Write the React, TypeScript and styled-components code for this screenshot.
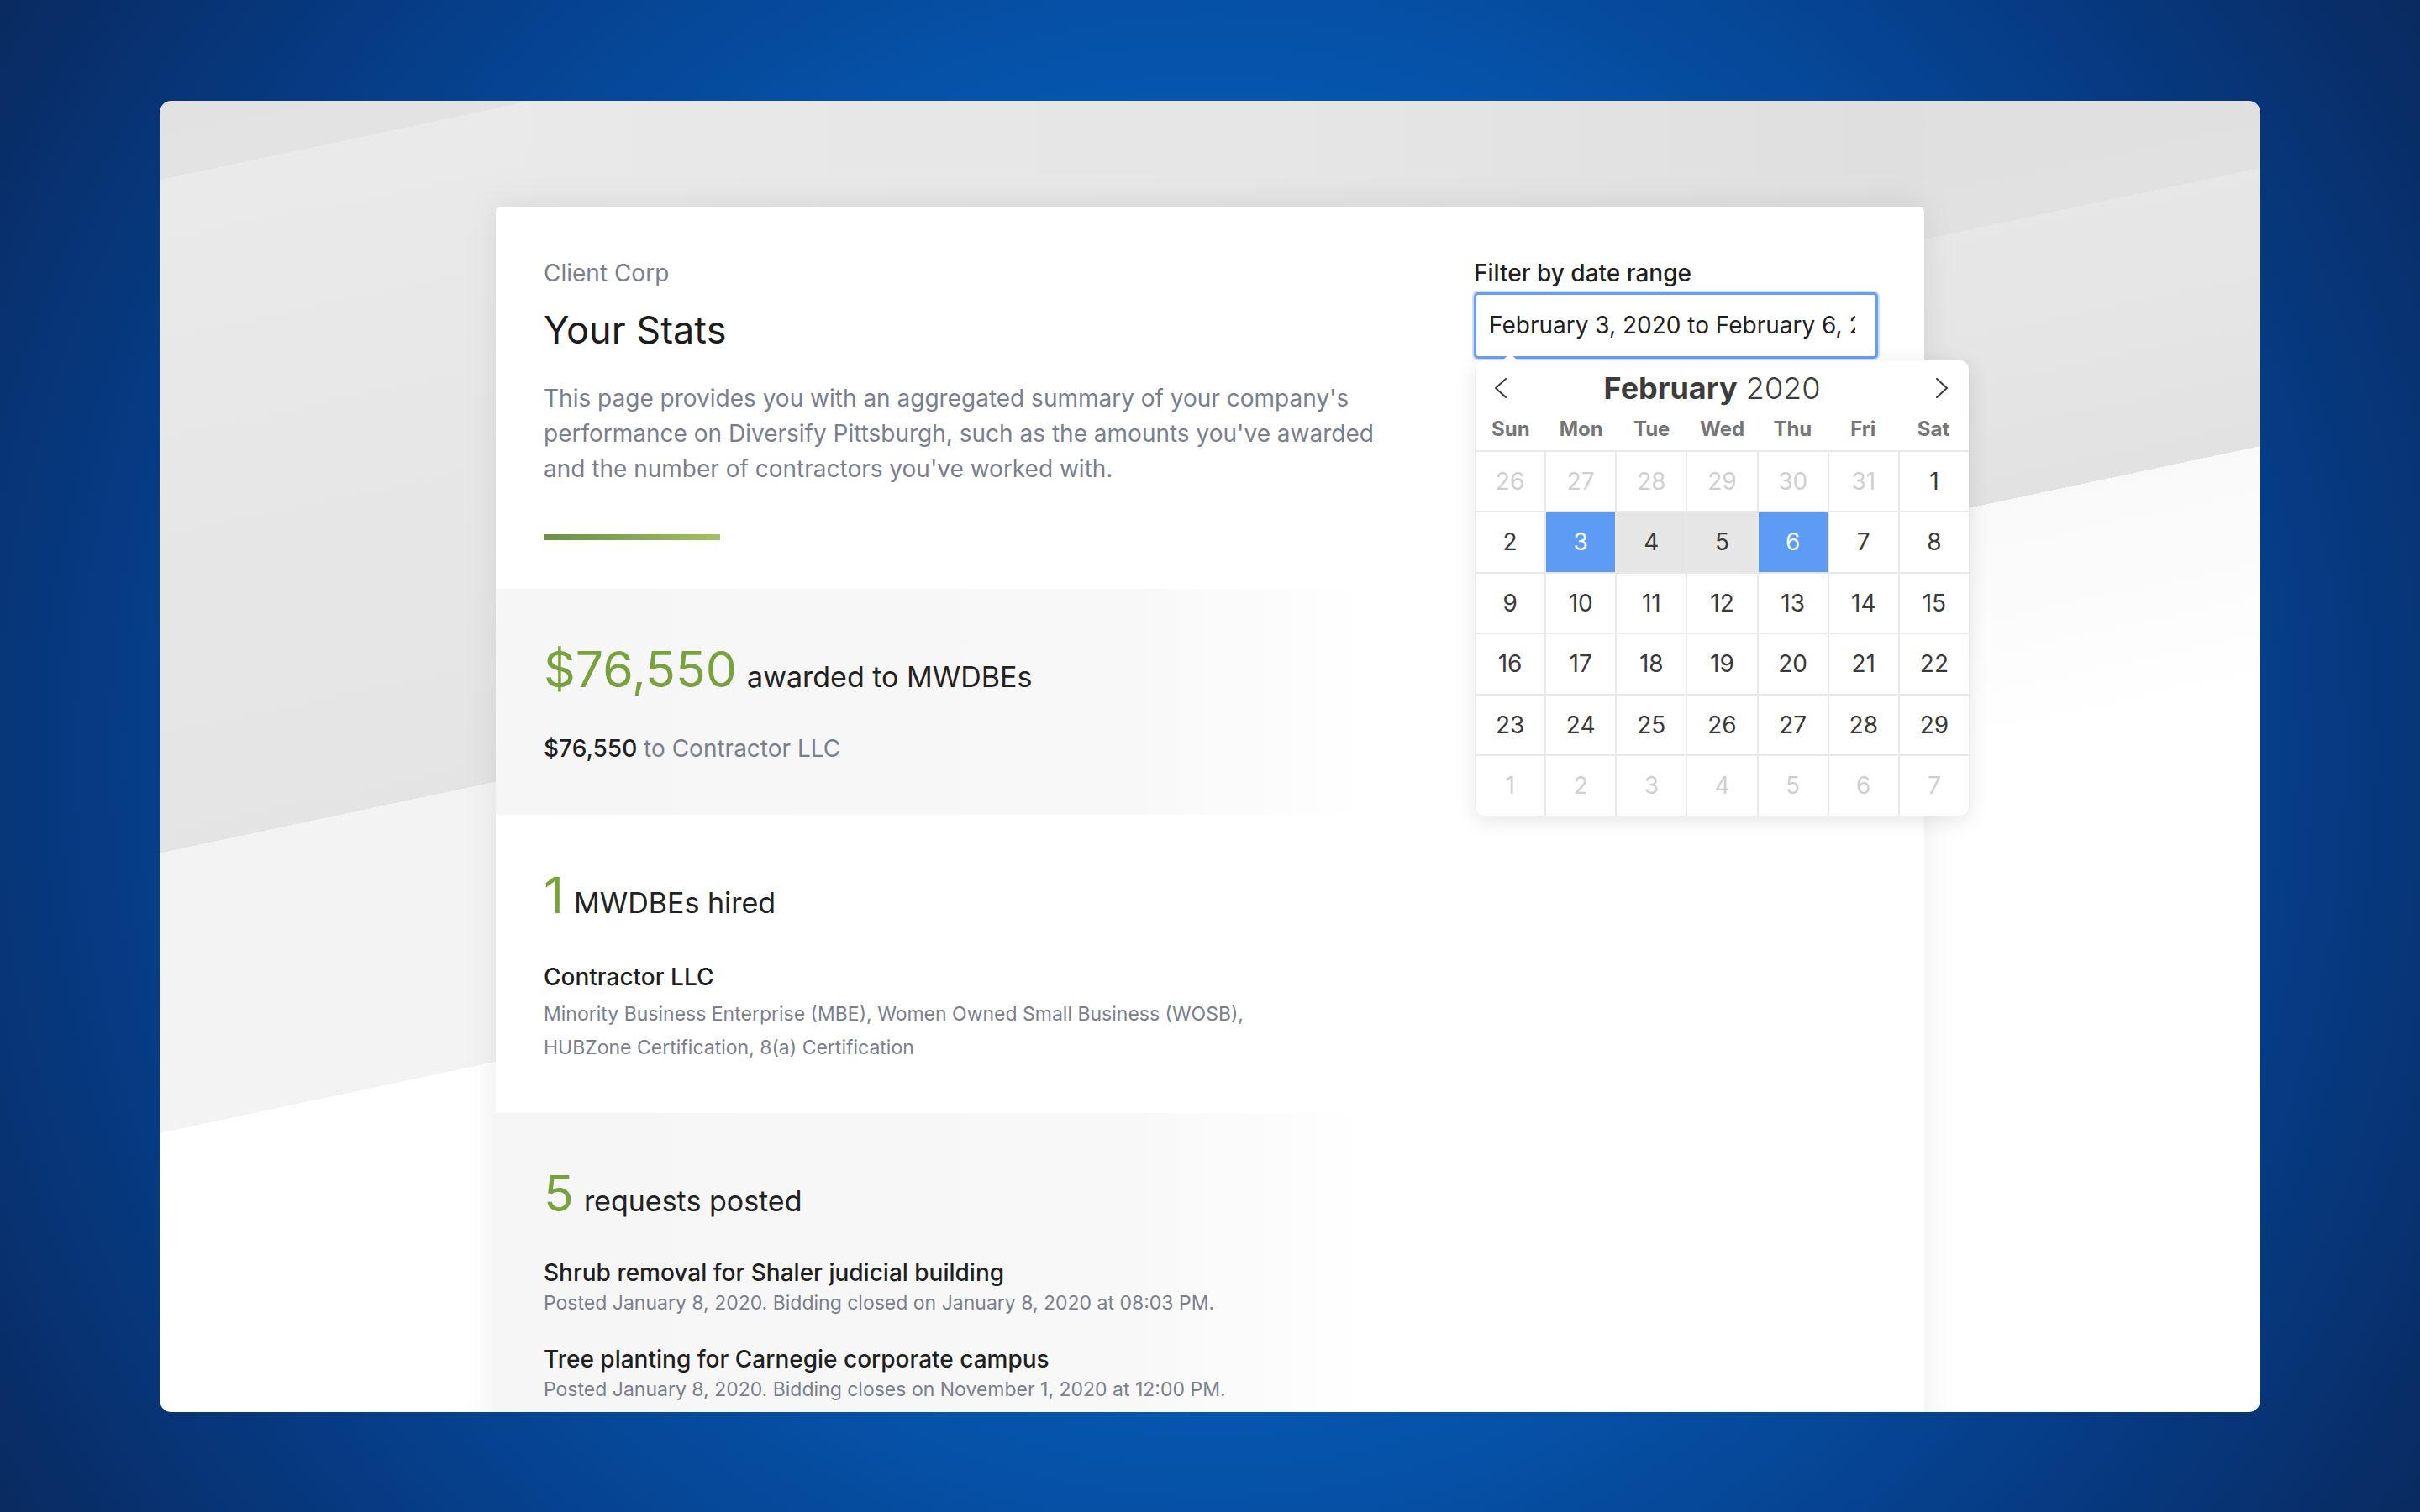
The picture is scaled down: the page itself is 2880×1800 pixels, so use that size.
import React from 'react'
import styled, { createGlobalStyle } from 'styled-components'

const GlobalStyle = createGlobalStyle`
    html, body {
        margin: 0;
        padding: 0;
        overflow: hidden;
    }
    body {
        font-family: Inter, 'Noto Sans', 'Liberation Sans', sans-serif;
        color: #1f1f1f;
    }
    * {
        box-sizing: border-box;
    }
`

const Page = styled.div`
    width: 100vw;
    height: 100vh;
    display: flex;
    align-items: center;
    justify-content: center;
    background: radial-gradient(ellipse 62% 100% at 50% 50%, #0567cb 0%, #0559b4 40%, #063a82 75%, #0a2657 100%);
`

// the light window: diagonal bands per half, plus a soft strip above the card to hide the join
const Frame = styled.div`
    width: 2500px;
    height: 1561px;
    border-radius: 14px;
    overflow: hidden;
    display: flex;
    justify-content: center;
    align-items: flex-start;
    padding-top: 126px;
    background:
        linear-gradient(90deg, #e9e9e9 0%, #e6e6e6 50%, #dfdfdf 100%) 440px 0 / 1660px 126px no-repeat,
        linear-gradient(168deg, #e2e2e2 0, #e3e3e3 92px, #eaeaea 92px, #e4e4e4 876px, #f3f3f3 876px, #f3f3f3 1202px, #ffffff 1202px)
            left top / 50% 100% no-repeat,
        linear-gradient(168deg, #dfdfdf 0, #e1e1e1 338px, #e7e7e7 338px, #e2e2e2 662px, #f9f9f9 662px, #ffffff 950px)
            right top / 50% 100% no-repeat;
`

const Card = styled.div`
    width: 1700px;
    background: #fff;
    border-radius: 6px 6px 0 0;
    box-shadow: 0 0 40px rgba(0, 0, 0, 0.08);
`

const Header = styled.section`
    display: flex;
    justify-content: space-between;
    align-items: flex-start;
    padding: 58px 55px 58px 57px;
`

const Intro = styled.div`
    width: 1040px;
`

const Company = styled.div`
    font-size: 28px;
    line-height: 42px;
    color: #7a7f8d;
`

const Title = styled.h1`
    margin: 19px 0 0;
    font-size: 45px;
    line-height: 55px;
    font-weight: 400;
    color: #1c1c1c;
`

const Description = styled.p`
    margin: 33px 0 0;
    font-size: 28px;
    line-height: 42px;
    color: #7a7f8d;
`

const GreenBar = styled.div`
    margin-top: 57px;
    width: 210px;
    height: 7px;
    background: linear-gradient(90deg, #6a8f45, #a2c163);
`

const FilterBox = styled.div`
    width: 481px;
    position: relative;
`

const FilterLabel = styled.label`
    display: block;
    font-size: 28px;
    line-height: 42px;
    font-weight: 500;
    color: #1f1f1f;
    margin-bottom: 2px;
`

const DateInput = styled.input`
    width: 100%;
    height: 79px;
    border: 3px solid #6a9df4;
    border-radius: 5px;
    box-shadow: 0 0 0 2px rgba(120, 165, 245, 0.35);
    padding: 0 24px 0 15px;
    font-family: Inter, 'Noto Sans', sans-serif;
    font-size: 28px;
    color: #1f1f1f;
    background: #fff;
    outline: none;
`

const Calendar = styled.div`
    position: absolute;
    top: calc(100% + 2px);
    left: 2px;
    width: 587px;
    background: #fff;
    border-radius: 10px;
    box-shadow: 0 6px 26px rgba(0, 0, 0, 0.1), 0 0 0 1px rgba(0, 0, 0, 0.025);
    z-index: 5;

    &::before {
        content: '';
        position: absolute;
        top: -8px;
        left: 32px;
        border-left: 9px solid transparent;
        border-right: 9px solid transparent;
        border-bottom: 8px solid #fff;
    }
`

const MonthBar = styled.div`
    display: flex;
    align-items: center;
    justify-content: space-between;
    height: 66px;
    padding: 0 24px 0 22px;
    color: #3c3c3c;
`

const MonthTitle = styled.div`
    font-size: 36px;
    line-height: 66px;
    padding-right: 22px;

    b {
        font-weight: 700;
    }
    span {
        font-weight: 300;
    }
`

const Weekdays = styled.div`
    display: grid;
    grid-template-columns: repeat(7, 1fr);
    height: 41px;
    padding-bottom: 9px;
`

const Weekday = styled.span`
    text-align: center;
    font-size: 24px;
    line-height: 32px;
    font-weight: 700;
    color: #757575;
`

const DayGrid = styled.div`
    display: grid;
    grid-template-columns: repeat(7, 1fr);
    grid-auto-rows: 70.5px;
    gap: 2px;
    background: #e9e9e9;
    border-top: 2px solid #e9e9e9;
    border-radius: 0 0 10px 10px;
    overflow: hidden;
`

type DayKind = 'muted' | 'normal' | 'selected' | 'range'

const Day = styled.div<{ $kind: DayKind }>`
    display: flex;
    align-items: center;
    justify-content: center;
    font-size: 28px;
    background: ${(p) => (p.$kind === 'selected' ? '#5e9bf5' : p.$kind === 'range' ? '#e6e6e6' : '#fff')};
    color: ${(p) => (p.$kind === 'selected' ? '#fff' : p.$kind === 'muted' ? '#cfcfcf' : '#3a3a3a')};
`

const StatSection = styled.section<{ $shaded?: boolean }>`
    padding: 61px 57px 58px;
    background: ${(p) => (p.$shaded ? 'linear-gradient(90deg, #f6f6f6 0%, #f8f8f8 45%, #ffffff 61%)' : '#fff')};
`

const StatRow = styled.div`
    display: flex;
    align-items: baseline;
    gap: 12px;
`

const BigNumber = styled.span`
    font-size: 59px;
    line-height: 1.2;
    color: #77a23c;
`

const StatLabel = styled.span`
    font-size: 34px;
    color: #222;
`

const Detail = styled.div`
    margin-top: 38px;
    font-size: 28px;
    line-height: 42px;
    color: #7a7f8d;

    strong {
        font-weight: 500;
        color: #1f1f1f;
    }
`

const ItemList = styled.div<{ $gap: number }>`
    margin-top: ${(p) => p.$gap}px;
    display: flex;
    flex-direction: column;
    gap: 31px;
`

const ItemTitle = styled.div`
    font-size: 28px;
    line-height: 36px;
    font-weight: 500;
    color: #1f1f1f;
`

const ItemMeta = styled.div<{ $lh?: number }>`
    font-size: 23px;
    line-height: ${(p) => p.$lh || 36}px;
    color: #7a7f8d;
`

const CertMeta = styled(ItemMeta)`
    margin-top: 6px;
    max-width: 900px;
`

const Chevron = ({ dir }: { dir: 'left' | 'right' }) => (
    <svg width="16" height="24" viewBox="0 0 16 24" fill="none">
        <polyline
            points={dir === 'left' ? '14,1 2,12 14,23' : '2,1 14,12 2,23'}
            stroke="#3c3c3c"
            strokeWidth="2"
            strokeLinecap="round"
            strokeLinejoin="round"
        />
    </svg>
)

const weekdays = ['Sun', 'Mon', 'Tue', 'Wed', 'Thu', 'Fri', 'Sat']

const buildDays = () => {
    const days: { n: number; kind: DayKind }[] = []
    for (let d = 26; d <= 31; d++) days.push({ n: d, kind: 'muted' })
    for (let d = 1; d <= 29; d++) {
        const kind: DayKind = d === 3 || d === 6 ? 'selected' : d === 4 || d === 5 ? 'range' : 'normal'
        days.push({ n: d, kind })
    }
    for (let d = 1; d <= 7; d++) days.push({ n: d, kind: 'muted' })
    return days
}

const requests = [
    {
        title: 'Shrub removal for Shaler judicial building',
        meta: 'Posted January 8, 2020. Bidding closed on January 8, 2020 at 08:03 PM.',
    },
    {
        title: 'Tree planting for Carnegie corporate campus',
        meta: 'Posted January 8, 2020. Bidding closes on November 1, 2020 at 12:00 PM.',
    },
]

export default function App() {
    const days = buildDays()

    return (
        <>
            <GlobalStyle />
            <Page>
                <Frame>
                    <Card>
                        <Header>
                            <Intro>
                                <Company>Client Corp</Company>
                                <Title>Your Stats</Title>
                                <Description>
                                    This page provides you with an aggregated summary of your company's performance on
                                    Diversify Pittsburgh, such as the amounts you've awarded and the number of
                                    contractors you've worked with.
                                </Description>
                                <GreenBar />
                            </Intro>

                            <FilterBox>
                                <FilterLabel>Filter by date range</FilterLabel>
                                <DateInput readOnly value="February 3, 2020 to February 6, 2020" />
                                <Calendar>
                                    <MonthBar>
                                        <Chevron dir="left" />
                                        <MonthTitle>
                                            <b>February</b> <span>2020</span>
                                        </MonthTitle>
                                        <Chevron dir="right" />
                                    </MonthBar>
                                    <Weekdays>
                                        {weekdays.map((w) => (
                                            <Weekday key={w}>{w}</Weekday>
                                        ))}
                                    </Weekdays>
                                    <DayGrid>
                                        {days.map((d, i) => (
                                            <Day key={i} $kind={d.kind}>
                                                {d.n}
                                            </Day>
                                        ))}
                                    </DayGrid>
                                </Calendar>
                            </FilterBox>
                        </Header>

                        <StatSection $shaded>
                            <StatRow>
                                <BigNumber>$76,550</BigNumber>
                                <StatLabel>awarded to MWDBEs</StatLabel>
                            </StatRow>
                            <Detail>
                                <strong>$76,550</strong> to Contractor LLC
                            </Detail>
                        </StatSection>

                        <StatSection>
                            <StatRow>
                                <BigNumber>1</BigNumber>
                                <StatLabel>MWDBEs hired</StatLabel>
                            </StatRow>
                            <ItemList $gap={43}>
                                <div>
                                    <ItemTitle>Contractor LLC</ItemTitle>
                                    <CertMeta $lh={40}>
                                        Minority Business Enterprise (MBE), Women Owned Small Business (WOSB), HUBZone
                                        Certification, 8(a) Certification
                                    </CertMeta>
                                </div>
                            </ItemList>
                        </StatSection>

                        <StatSection $shaded>
                            <StatRow>
                                <BigNumber>5</BigNumber>
                                <StatLabel>requests posted</StatLabel>
                            </StatRow>
                            <ItemList $gap={40}>
                                {requests.map((r) => (
                                    <div key={r.title}>
                                        <ItemTitle>{r.title}</ItemTitle>
                                        <ItemMeta>{r.meta}</ItemMeta>
                                    </div>
                                ))}
                            </ItemList>
                        </StatSection>
                    </Card>
                </Frame>
            </Page>
        </>
    )
}
